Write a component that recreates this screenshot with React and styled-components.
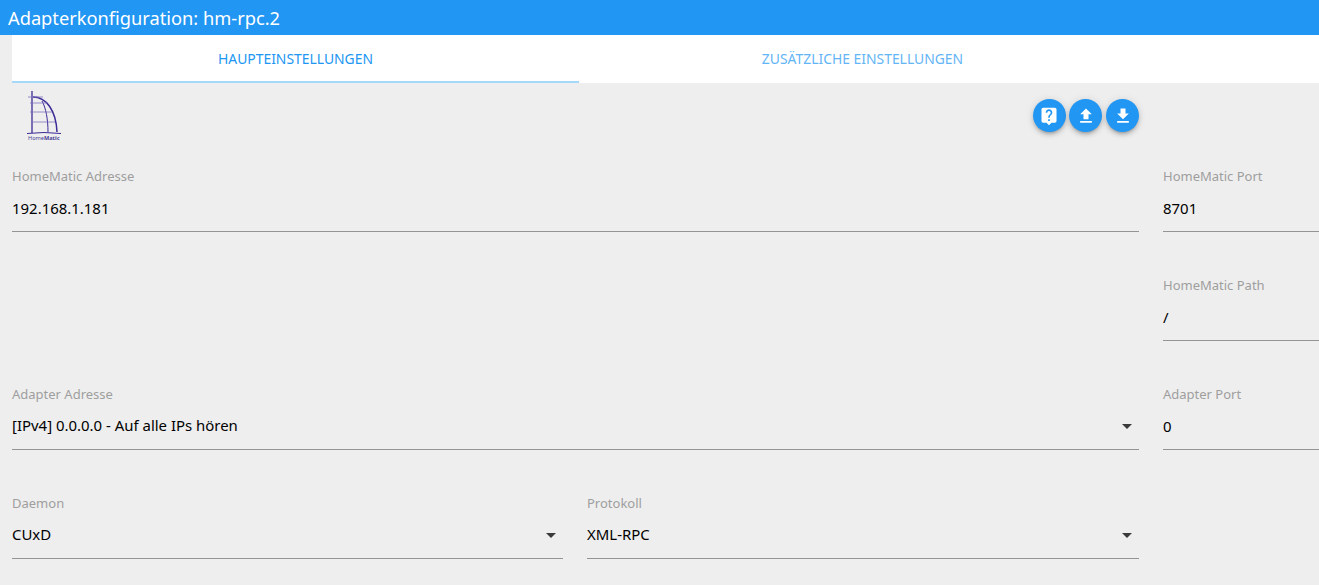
import React from "react";
import styled, { createGlobalStyle } from "styled-components";

const GlobalStyle = createGlobalStyle`
    html, body {
        margin: 0;
        padding: 0;
        height: 100%;
        background-color: #EEEEEE;
        overflow: hidden;
    }
    body {
        font-family: "Noto Sans", "Open Sans", "Liberation Sans", sans-serif;
    }
`

const Page = styled.div`
    width: 1319px;
    height: 585px;
    overflow: hidden;
    background-color: #EEEEEE;
`
const TitleBar = styled.header`
    height: 35px;
    display: flex;
    align-items: center;
    padding-left: 8px;
    background-color: #2196F3;
    color: #FFFFFF;
    font-size: 18.25px;
    line-height: 35px;
`
const Tabs = styled.nav`
    display: flex;
    height: 48px;
    margin-left: 12px;
    background-color: #FFFFFF;
`
const Tab = styled.div`
    box-sizing: border-box;
    width: 567px;
    padding-top: 1px;
    display: flex;
    align-items: center;
    justify-content: center;
    font-size: 13.9px;
    color: ${(props) => (props.$active ? "#2196F3" : "#64B5F6")};
    border-bottom: 2px solid ${(props) => (props.$active ? "#A6D8FA" : "transparent")};
`
const Content = styled.main`
    padding-left: 12px;
`
const Toolbar = styled.div`
    width: 1127px;
    height: 83px;
    display: flex;
    justify-content: space-between;
`
const Logo = styled.svg`
    width: 40px;
    height: 52px;
    margin: 7px 0 0 12px;
`
const Buttons = styled.div`
    display: flex;
    column-gap: 3.6px;
    padding-top: 16px;
`
const RoundButton = styled.button`
    width: 33px;
    height: 33px;
    padding: 0;
    border: none;
    border-radius: 50%;
    display: flex;
    align-items: center;
    justify-content: center;
    background-color: #2196F3;
    box-shadow: 0 3px 3px -2px rgba(0, 0, 0, 0.2), 0 3px 4px rgba(0, 0, 0, 0.14), 0 1px 8px rgba(0, 0, 0, 0.12);
`
const Form = styled.div`
    display: grid;
    grid-template-columns: 1127px 156px;
    column-gap: 24px;
    row-gap: 43px;
`
const Split = styled.div`
    display: grid;
    grid-template-columns: 551px 552px;
    column-gap: 24px;
`
const Field = styled.div`
    box-sizing: border-box;
    height: 66px;
    position: relative;
    border-bottom: 1px solid #949494;
`
const Label = styled.label`
    display: block;
    height: 20px;
    font-size: 13px;
    line-height: 20px;
    color: #9E9E9E;
`
const Value = styled.div`
    margin-top: ${(props) => (props.$select ? "11px" : "12px")};
    font-size: 14.95px;
    line-height: 20px;
    color: #000000;
`
const Caret = styled.svg`
    position: absolute;
    right: 0;
    bottom: 11px;
    width: 24px;
    height: 24px;
    fill: #3A3A3A;
`
const Glyph = styled.svg`
    width: 20px;
    height: 20px;
    fill: #FFFFFF;
`

const InputField = ({ label, value, select }) => (
    <Field>
        <Label>{label}</Label>
        <Value $select={select}>{value}</Value>
        {select && (
            <Caret viewBox="0 0 24 24">
                <path d="M7 10l5 5 5-5z" />
            </Caret>
        )}
    </Field>
)

const HomeMaticLogo = () => (
    <Logo viewBox="0 0 40 52" fill="none" stroke="#3B2A96">
        <path d="M8 1V43" strokeWidth="1.3" />
        <path d="M9 7C22 7 32 20 33 42" strokeWidth="1.5" />
        <path d="M18 11C22 18 24 30 24 42" strokeWidth="1" />
        <path d="M4 7H19M6 13H23M6 22H28M9 32H31" strokeWidth="0.8" stroke="#7C72BC" />
        <path d="M3 43.5Q20 41.5 37 43.5" strokeWidth="1" />
        <text x="4" y="49.5" fontSize="5.6" fill="#4A3F96" stroke="none">
            Home<tspan fontWeight="700">Matic</tspan>
        </text>
    </Logo>
)

export default function App() {
    return (
        <Page>
            <GlobalStyle />
            <TitleBar>Adapterkonfiguration: hm-rpc.2</TitleBar>
            <Tabs>
                <Tab $active>HAUPTEINSTELLUNGEN</Tab>
                <Tab>ZUSÄTZLICHE EINSTELLUNGEN</Tab>
            </Tabs>
            <Content>
                <Toolbar>
                    <HomeMaticLogo />
                    <Buttons>
                        <RoundButton>
                            <Glyph viewBox="0 0 24 24">
                                <path d="M19 2H5c-1.11 0-2 .9-2 2v14c0 1.1.89 2 2 2h4l3 3 3-3h4c1.1 0 2-.9 2-2V4c0-1.1-.9-2-2-2zm-6 16h-2v-2h2v2zm2.07-7.75l-.9.92C13.45 11.9 13 12.5 13 14h-2v-.5c0-1.1.45-2.1 1.17-2.83l1.24-1.26c.37-.36.59-.86.59-1.41 0-1.1-.9-2-2-2s-2 .9-2 2H8c0-2.21 1.79-4 4-4s4 1.79 4 4c0 .88-.36 1.68-.93 2.25z" />
                            </Glyph>
                        </RoundButton>
                        <RoundButton>
                            <Glyph viewBox="0 0 24 24">
                                <path d="M9 16h6v-6h4l-7-7-7 7h4zm-4 2h14v2H5z" />
                            </Glyph>
                        </RoundButton>
                        <RoundButton>
                            <Glyph viewBox="0 0 24 24">
                                <path d="M19 9h-4V3H9v6H5l7 7 7-7zM5 18v2h14v-2H5z" />
                            </Glyph>
                        </RoundButton>
                    </Buttons>
                </Toolbar>
                <Form>
                    <InputField label="HomeMatic Adresse" value="192.168.1.181" />
                    <InputField label="HomeMatic Port" value="8701" />
                    <div />
                    <InputField label="HomeMatic Path" value="/" />
                    <InputField label="Adapter Adresse" value="[IPv4] 0.0.0.0 - Auf alle IPs hören" select />
                    <InputField label="Adapter Port" value="0" />
                    <Split>
                        <InputField label="Daemon" value="CUxD" select />
                        <InputField label="Protokoll" value="XML-RPC" select />
                    </Split>
                </Form>
            </Content>
        </Page>
    )
}
